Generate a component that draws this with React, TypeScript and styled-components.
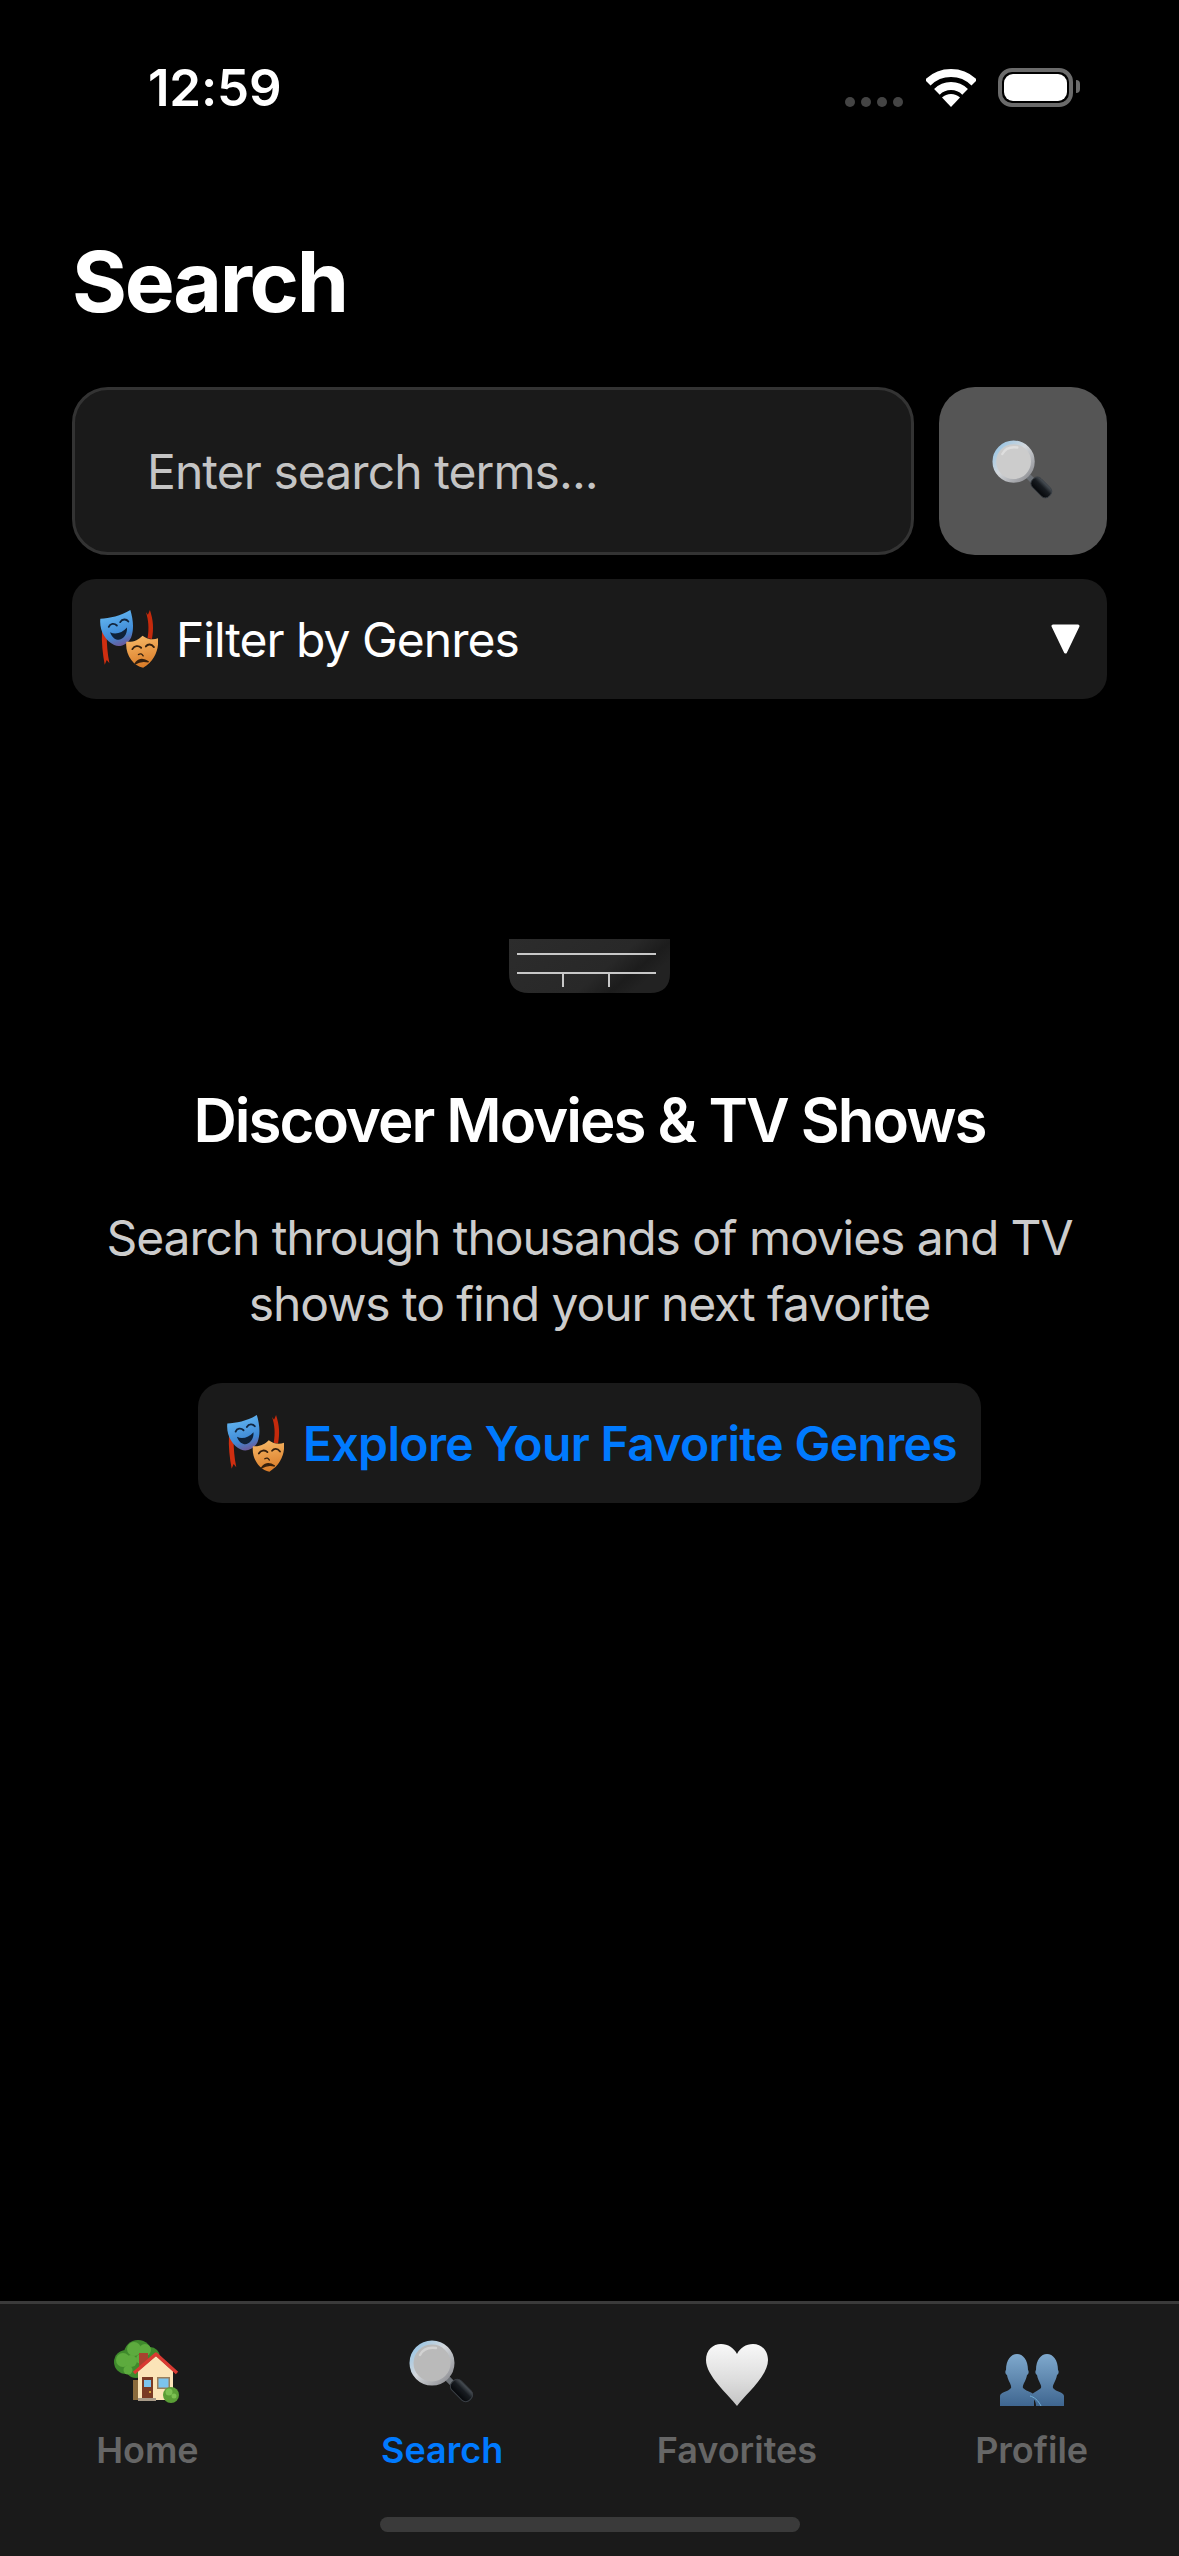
import React from "react";
import styled, { createGlobalStyle } from "styled-components";

const GlobalStyle = createGlobalStyle`
  html, body {
    margin: 0;
    padding: 0;
    background: #000;
  }
  * {
    box-sizing: border-box;
  }
`;

const MasksIcon = ({ size }: { size: number }): JSX.Element => (
  <svg width={size} height={size} viewBox="0 0 172 172">
    <defs>
      <linearGradient id="maskBlue" x1="0.3" y1="0" x2="0.6" y2="1">
        <stop offset="0" stopColor="#66baf4" />
        <stop offset="0.7" stopColor="#3f8ad6" />
        <stop offset="1" stopColor="#6b5a9a" />
      </linearGradient>
      <linearGradient id="maskOrange" x1="0.4" y1="0" x2="0.6" y2="1">
        <stop offset="0" stopColor="#f6b765" />
        <stop offset="1" stopColor="#d97a26" />
      </linearGradient>
    </defs>
    <path d="M6 62 C4 95 8 130 14 162 L20 148 L28 158 C22 128 20 100 20 76Z" fill="#cf2e10" />
    <path d="M136 6 L142 14 L148 0 C158 30 160 55 154 86 L141 84 C146 55 144 30 136 6Z" fill="#c42a0c" />
    <path
      d="M1 26 C28 24 62 18 90 0 C98 26 102 58 92 82 C82 102 60 112 42 104 C16 92 -3 60 1 26Z"
      fill="url(#maskBlue)"
    />
    <g fill="none" stroke="#12263f" strokeWidth="5.5" strokeLinecap="round">
      <path d="M26 50 C30 40 42 38 50 46" />
      <path d="M60 36 C66 26 78 26 84 34" />
    </g>
    <path d="M30 66 C46 74 66 68 80 52 C82 74 66 90 52 88 C42 87 34 78 30 66Z" fill="#0f2238" />
    <path
      d="M78 94 C100 96 114 88 126 76 C140 86 156 90 172 84 C175 114 164 150 128 171 C98 166 74 132 78 94Z"
      fill="url(#maskOrange)"
    />
    <g fill="none" stroke="#35200e" strokeWidth="5.5" strokeLinecap="round">
      <path d="M96 116 C102 106 114 104 122 112" />
      <path d="M136 108 C142 100 152 100 160 110" />
    </g>
    <path d="M104 160 C112 146 126 142 144 154 C130 150 116 152 104 160Z" fill="#35200e" stroke="#35200e" strokeWidth="4" />
    <path d="M114 132 C120 128 124 130 128 136" fill="none" stroke="#35200e" strokeWidth="4" strokeLinecap="round" />
  </svg>
);

const MagnifierIcon = ({ size }: { size: number }): JSX.Element => (
  <svg width={size} height={size} viewBox="0 0 66 66">
    <defs>
      <linearGradient id="lensRing" x1="0" y1="0" x2="1" y2="1">
        <stop offset="0" stopColor="#8fc2e6" />
        <stop offset="0.45" stopColor="#d4d8dc" />
        <stop offset="1" stopColor="#85858a" />
      </linearGradient>
      <linearGradient id="lensHandle" x1="0" y1="0" x2="0" y2="1">
        <stop offset="0" stopColor="#4c5359" />
        <stop offset="0.4" stopColor="#181c21" />
        <stop offset="1" stopColor="#05070a" />
      </linearGradient>
    </defs>
    <path d="M37 37 L44 44" stroke="#6a6f75" strokeWidth="6" />
    <rect
      x="40"
      y="44"
      width="25"
      height="13"
      rx="5.5"
      transform="rotate(45 52.5 50.5)"
      fill="url(#lensHandle)"
      stroke="#3a3f45"
      strokeWidth="1"
    />
    <circle cx="23" cy="23" r="20.5" fill="#fff" fillOpacity="0.7" stroke="url(#lensRing)" strokeWidth="4" />
    <path d="M11 15 C14 9 20 7 27 8" fill="none" stroke="#fff" strokeOpacity="0.35" strokeWidth="2.5" strokeLinecap="round" />
  </svg>
);

const HouseIcon = (): JSX.Element => (
  <svg width="66" height="66" viewBox="0 0 66 66">
    <rect x="19" y="40" width="7" height="20" fill="#8b6b3c" />
    <g fill="#3f8a2c">
      <circle cx="24" cy="14" r="14" />
      <circle cx="12" cy="22" r="12" />
      <circle cx="36" cy="17" r="10" />
      <circle cx="22" cy="27" r="11" />
    </g>
    <g fill="#5dab3e">
      <circle cx="20" cy="9" r="7" />
      <circle cx="9" cy="20" r="7" />
      <circle cx="31" cy="10" r="6" />
      <circle cx="17" cy="21" r="6" />
      <circle cx="27" cy="19" r="5" />
      <circle cx="14" cy="30" r="4.5" />
    </g>
    <rect x="25" y="13" width="9" height="13" fill="#a8412f" />
    <path d="M24 31 L42 16 L59 31 V60 H24Z" fill="#fbe4b8" />
    <path d="M20 33 L42 14 L63 33" fill="none" stroke="#d93a32" strokeWidth="3.5" strokeLinejoin="round" />
    <rect x="28" y="37" width="11" height="22" fill="#7a3a24" />
    <rect x="30" y="40" width="7" height="7" fill="#7cc4ee" />
    <circle cx="36" cy="52" r="1" fill="#f0c040" />
    <rect x="43" y="37" width="13" height="12" fill="#9a7f5c" />
    <rect x="44.5" y="38.5" width="10" height="9" fill="#7cc4ee" />
    <rect x="24" y="58" width="18" height="3" fill="#a89a88" />
    <circle cx="57" cy="55" r="8" fill="#5a9e36" />
    <circle cx="55" cy="52" r="3.5" fill="#7cc052" />
    <circle cx="60" cy="56" r="2.5" fill="#7cc052" />
  </svg>
);

const HeartIcon = (): JSX.Element => (
  <svg width="62" height="62" viewBox="0 0 62 62">
    <defs>
      <linearGradient id="heartFill" x1="0" y1="0" x2="0" y2="1">
        <stop offset="0" stopColor="#f8f8f8" />
        <stop offset="0.6" stopColor="#dcdcdc" />
        <stop offset="1" stopColor="#c4c4c4" />
      </linearGradient>
    </defs>
    <path
      d="M31 62 C22 50 0 32 0 16 C0 6 7 0 15 0 C22 0 28 4 31 10 C34 4 40 0 47 0 C55 0 62 6 62 16 C62 32 40 50 31 62Z"
      fill="url(#heartFill)"
    />
  </svg>
);

const BustsIcon = (): JSX.Element => (
  <svg width="64" height="52" viewBox="0 0 64 52">
    <defs>
      <linearGradient id="bustFill" x1="0" y1="0" x2="0" y2="1">
        <stop offset="0" stopColor="#7fa9cd" />
        <stop offset="1" stopColor="#3f6690" />
      </linearGradient>
    </defs>
    <path
      d="M34 52 V42 C34 38 27 38 23 34 C22 31 26 27 27 21 C29 20 29 17 28 16 C28 6 23 0 17 0 C11 0 6 6 6 16 C5 17 5 20 7 21 C8 27 12 31 11 34 C8 38 0 38 0 42 V52Z"
      fill="url(#bustFill)"
    />
    <path
      d="M64 52 V42 C64 38 56 38 53 34 C52 31 56 27 57 21 C59 20 59 17 58 16 C58 6 53 0 47 0 C41 0 36 6 36 16 C35 17 35 20 37 21 C38 27 42 31 41 34 C38 37 32 39 30 42 C34 44 36 48 36 52Z"
      fill="url(#bustFill)"
    />
    <path d="M30 42 C34 43 38 46 41 52" fill="none" stroke="#6fb0d8" strokeWidth="1" />
  </svg>
);

const WifiIcon = (): JSX.Element => (
  <svg width="50" height="38" viewBox="0 0 50 38">
    <g fill="none" stroke="#fff" strokeWidth="8">
      <path d="M1.7 13.7 A33 33 0 0 1 48.3 13.7" />
      <path d="M10.9 22.9 A20 20 0 0 1 39.1 22.9" />
    </g>
    <path d="M25 38 L16 28.5 A13 13 0 0 1 34 28.5Z" fill="#fff" />
  </svg>
);

const ChevronIcon = (): JSX.Element => (
  <svg width="29" height="30" viewBox="0 0 29 30">
    <path d="M2 2 H27 L14.5 28Z" fill="#fff" stroke="#fff" strokeWidth="3" strokeLinejoin="round" />
  </svg>
);

const ClapperIcon = (): JSX.Element => (
  <svg width="161" height="54" viewBox="0 0 161 54">
    <defs>
      <linearGradient id="clapperFill" x1="0" y1="0" x2="1" y2="0.4">
        <stop offset="0" stopColor="#2c2c2c" />
        <stop offset="0.7" stopColor="#282828" />
        <stop offset="0.88" stopColor="#1c1c1c" />
        <stop offset="1" stopColor="#222" />
      </linearGradient>
    </defs>
    <path d="M0 0 H161 V34 Q161 54 141 54 H20 Q0 54 0 34Z" fill="url(#clapperFill)" />
    <g stroke="#c8c8c8" strokeWidth="2">
      <path d="M8 15 H147" />
      <path d="M8 34 H147" />
      <path d="M54 34 V48" />
      <path d="M100 34 V48" />
    </g>
  </svg>
);

const Page = styled.div`
  width: 1179px;
  height: 2556px;
  display: flex;
  flex-direction: column;
  overflow: hidden;
  background: #000;
  color: #fff;
  font-family: Inter, "Liberation Sans", sans-serif;
`;

const StatusBar = styled.div`
  height: 232px;
  padding: 60px 106px 0 148px;
  display: flex;
  justify-content: space-between;
  align-items: flex-start;
`;

const Clock = styled.div`
  font-size: 51px;
  line-height: 56px;
  font-weight: 600;
  letter-spacing: -0.2px;
`;

const StatusIcons = styled.div`
  display: flex;
  align-items: flex-end;
  height: 40px;
  margin-top: 7px;
`;

const SignalDots = styled.div`
  display: flex;
  gap: 6px;
  margin-right: 23px;
`;

const SignalDot = styled.span`
  width: 10px;
  height: 10px;
  border-radius: 5px;
  background: #444;
`;

const Battery = styled.div`
  position: relative;
  width: 75px;
  height: 39px;
  margin-left: 22px;
  padding: 2px;
  border: 4px solid #6b6b6b;
  border-radius: 14px;

  &::after {
    content: "";
    position: absolute;
    right: -11px;
    top: 8px;
    width: 4px;
    height: 13px;
    border-radius: 0 4px 4px 0;
    background: #6b6b6b;
  }
`;

const BatteryLevel = styled.div`
  width: 100%;
  height: 100%;
  border-radius: 9px;
  background: #fff;
`;

const Main = styled.main`
  flex: 1;
  padding: 0 72px;
  display: flex;
  flex-direction: column;
`;

const Title = styled.h1`
  margin: 0 0 55px;
  font-size: 84px;
  line-height: 100px;
  font-weight: 700;
  letter-spacing: -2.3px;
`;

const SearchRow = styled.div`
  display: flex;
  gap: 25px;
  margin-bottom: 24px;
`;

const SearchInput = styled.input`
  flex: 1;
  min-width: 0;
  height: 168px;
  padding: 0 72px;
  border: 3px solid #333;
  border-radius: 36px;
  background: #1a1a1a;
  color: #fff;
  font-family: inherit;
  font-size: 48px;
  letter-spacing: -0.93px;

  &::placeholder {
    color: #c4c4c4;
    opacity: 1;
  }

  &:focus {
    outline: none;
  }
`;

const SearchButton = styled.button`
  width: 168px;
  height: 168px;
  padding: 0;
  border: none;
  border-radius: 36px;
  background: #555;
  display: flex;
  align-items: center;
  justify-content: center;
`;

const FilterButton = styled.button`
  height: 120px;
  padding: 0 27px 0 28px;
  border: none;
  border-radius: 24px;
  background: #1a1a1a;
  color: #fff;
  display: flex;
  align-items: center;
  font-family: inherit;
  font-size: 48px;
  letter-spacing: -1px;
`;

const FilterLabel = styled.span`
  flex: 1;
  margin-left: 18px;
  text-align: left;
`;

const EmptyState = styled.section`
  margin-top: 240px;
  display: flex;
  flex-direction: column;
  align-items: center;
  text-align: center;
`;

const Heading = styled.h2`
  margin: 91px 0 49px;
  font-size: 60px;
  line-height: 72px;
  font-weight: 600;
  letter-spacing: -2px;
`;

const Description = styled.p`
  width: 1000px;
  margin: 0 0 46px;
  font-size: 48px;
  line-height: 66px;
  letter-spacing: -1.08px;
  color: #ccc;
`;

const ExploreButton = styled.button`
  height: 120px;
  padding: 0 24px 0 29px;
  border: none;
  border-radius: 24px;
  background: #1a1a1a;
  color: #007aff;
  display: flex;
  align-items: center;
  gap: 19px;
  font-family: inherit;
  font-size: 48px;
  font-weight: 600;
  letter-spacing: -0.64px;
`;

const TabBar = styled.nav`
  height: 255px;
  padding-top: 36px;
  border-top: 3px solid #3a3a3a;
  background: #1a1a1a;
  display: flex;
  flex-direction: column;
`;

const Tabs = styled.div`
  display: flex;
`;

const Tab = styled.div`
  flex: 1;
  display: flex;
  flex-direction: column;
  align-items: center;
`;

const TabIcon = styled.div`
  height: 66px;
  margin-bottom: 22px;
  display: flex;
  align-items: flex-end;
  justify-content: center;
`;

const TabLabel = styled.span<{ $active?: boolean }>`
  font-size: 36px;
  line-height: 44px;
  font-weight: 600;
  color: ${(p) => (p.$active ? "#007aff" : "#666")};
`;

const HomeIndicator = styled.div`
  width: 420px;
  height: 15px;
  margin: 45px auto 0;
  border-radius: 8px;
  background: #3a3a3a;
`;

const tabs = [
  { label: "Home", icon: <HouseIcon /> },
  { label: "Search", icon: <MagnifierIcon size={66} />, active: true },
  { label: "Favorites", icon: <HeartIcon /> },
  { label: "Profile", icon: <BustsIcon /> },
];

export default function App(): JSX.Element {
  return (
    <Page>
      <GlobalStyle />
      <StatusBar>
        <Clock>12:59</Clock>
        <StatusIcons>
          <SignalDots>
            <SignalDot />
            <SignalDot />
            <SignalDot />
            <SignalDot />
          </SignalDots>
          <WifiIcon />
          <Battery>
            <BatteryLevel />
          </Battery>
        </StatusIcons>
      </StatusBar>
      <Main>
        <Title>Search</Title>
        <SearchRow>
          <SearchInput placeholder="Enter search terms..." />
          <SearchButton>
            <MagnifierIcon size={62} />
          </SearchButton>
        </SearchRow>
        <FilterButton>
          <MasksIcon size={58} />
          <FilterLabel>Filter by Genres</FilterLabel>
          <ChevronIcon />
        </FilterButton>
        <EmptyState>
          <ClapperIcon />
          <Heading>Discover Movies &amp; TV Shows</Heading>
          <Description>
            Search through thousands of movies and TV shows to find your next favorite
          </Description>
          <ExploreButton>
            <MasksIcon size={57} />
            Explore Your Favorite Genres
          </ExploreButton>
        </EmptyState>
      </Main>
      <TabBar>
        <Tabs>
          {tabs.map((tab) => (
            <Tab key={tab.label}>
              <TabIcon>{tab.icon}</TabIcon>
              <TabLabel $active={tab.active}>{tab.label}</TabLabel>
            </Tab>
          ))}
        </Tabs>
        <HomeIndicator />
      </TabBar>
    </Page>
  );
}
